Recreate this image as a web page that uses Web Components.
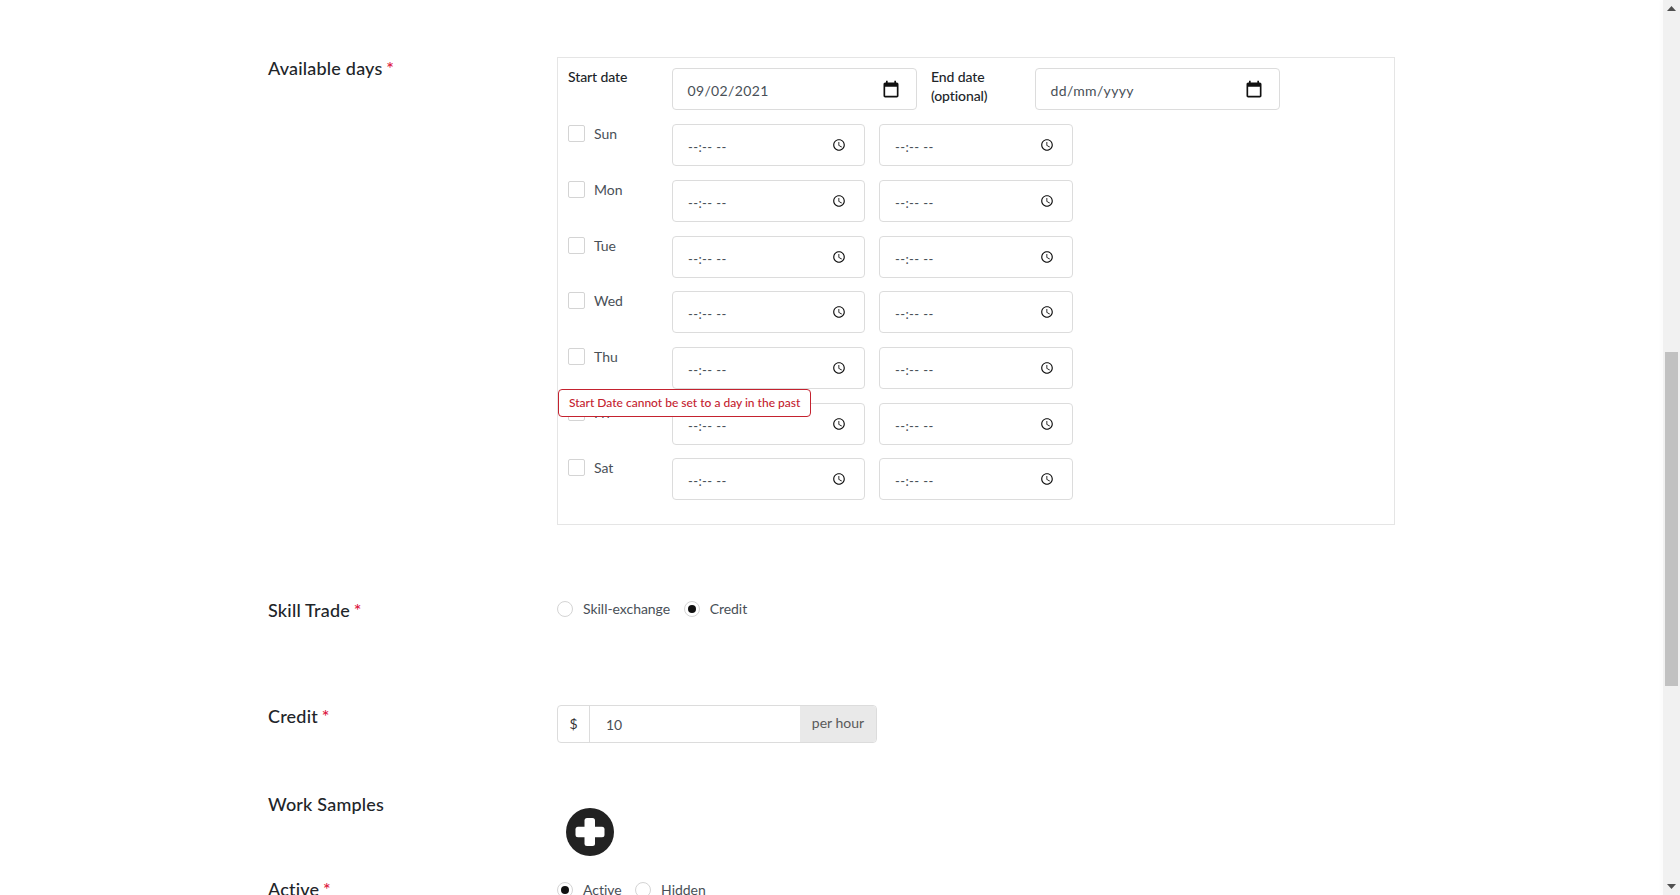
<!DOCTYPE html>
<html lang="en">
<head>
<meta charset="utf-8">
<title>Available days</title>
<style>
  html, body { margin: 0; height: 100%; overflow: hidden; background: #fff; }
  body { font-family: Lato, "Liberation Sans", sans-serif; color: #212529; }
</style>
</head>
<body>
<app-page>
  <form-row label="Available days" required style="--pad: 2px; margin-bottom: 72px">
    <avail-panel>
      <panel-row>
        <field-label strong>Start date</field-label>
        <picker-field kind="date" value="09/02/2021" style="width: 245px"></picker-field>
        <field-label strong style="margin-left: 14px">End date<br>(optional)</field-label>
        <picker-field kind="date" value="dd/mm/yyyy" style="width: 245px"></picker-field>
      </panel-row>
      <day-row day="Sun"></day-row>
      <day-row day="Mon"></day-row>
      <day-row day="Tue"></day-row>
      <day-row day="Wed"></day-row>
      <day-row day="Thu"></day-row>
      <day-row day="Fri"></day-row>
      <day-row day="Sat"></day-row>
      <error-tip slot="tip">Start Date cannot be set to a day in the past</error-tip>
    </avail-panel>
  </form-row>

  <form-row label="Skill Trade" required style="--pad: 1px; margin-bottom: 79px">
    <radio-group>
      <radio-option>Skill-exchange</radio-option>
      <radio-option checked>Credit</radio-option>
    </radio-group>
  </form-row>

  <form-row label="Credit" required style="--pad: 2px; margin-bottom: 48px">
    <credit-group value="10"></credit-group>
  </form-row>

  <form-row label="Work Samples" style="--pad: 17px; margin-bottom: 20px">
    <add-button></add-button>
  </form-row>

  <form-row label="Active" required style="--pad: 3px">
    <radio-group>
      <radio-option checked>Active</radio-option>
      <radio-option>Hidden</radio-option>
    </radio-group>
  </form-row>
</app-page>

<script>
class AppPage extends HTMLElement {
  constructor () {
    super()
    this.attachShadow({ mode: 'open' }).innerHTML = `
      <style>
        :host { display: flex; height: 895px; overflow: hidden; }
        main { flex: 1; min-width: 0; padding: 55px 0 0 268px; box-sizing: border-box; overflow: hidden; }
        .bar { width: 17px; flex: none; background: #f1f1f1; display: flex; flex-direction: column; align-items: center; box-shadow: -3px 0 4px rgba(0,0,0,.015); }
        .arrow { height: 17px; flex: none; display: flex; align-items: center; justify-content: center; }
        .track { flex: 1; width: 100%; box-sizing: border-box; padding: 335px 2px 192px; display: flex; }
        .thumb { flex: 1; background: #c1c1c1; }
      </style>
      <main><slot></slot></main>
      <div class="bar">
        <div class="arrow"><svg width="9" height="5" viewBox="0 0 9 5"><path d="M4.5 0 9 5H0z" fill="#505050"/></svg></div>
        <div class="track"><div class="thumb"></div></div>
        <div class="arrow"><svg width="9" height="5" viewBox="0 0 9 5"><path d="M0 0h9L4.5 5z" fill="#505050"/></svg></div>
      </div>
    `
  }
}

class FormRow extends HTMLElement {
  constructor () {
    super()
    this.attachShadow({ mode: 'open' })
  }

  connectedCallback () {
    const star = this.hasAttribute('required') ? '<span class="star">*</span>' : ''
    this.shadowRoot.innerHTML = `
      <style>
        :host { display: grid; grid-template-columns: 289px 838px; }
        .label { font-size: 18px; line-height: 27px; font-weight: 500; letter-spacing: .2px; color: #212529; }
        .star { color: #dc143c; margin-left: -1px; }
        .content { padding-top: var(--pad, 0); min-width: 0; }
      </style>
      <div class="label">${this.getAttribute('label')} ${star}</div>
      <div class="content"><slot></slot></div>
    `
  }
}

class AvailPanel extends HTMLElement {
  constructor () {
    super()
    this.attachShadow({ mode: 'open' }).innerHTML = `
      <style>
        :host { display: block; position: relative; box-sizing: border-box; height: 468px; border: 1px solid #e5e5e5; padding: 10px 10px 0; }
        .tip { position: absolute; left: 0; top: 331px; }
      </style>
      <slot></slot>
      <div class="tip"><slot name="tip"></slot></div>
    `
  }
}

class PanelRow extends HTMLElement {
  constructor () {
    super()
    this.attachShadow({ mode: 'open' }).innerHTML = `
      <style>
        :host { display: flex; height: 42px; margin-bottom: 14.4px; }
      </style>
      <slot></slot>
    `
  }
}

class FieldLabel extends HTMLElement {
  constructor () {
    super()
    this.attachShadow({ mode: 'open' }).innerHTML = `
      <style>
        :host { display: block; width: 104px; flex: none; font-size: 14px; line-height: 19px; margin-top: -1px; letter-spacing: -.1px; color: #333; }
        :host([strong]) { font-weight: 500; color: #212529; }
      </style>
      <slot></slot>
    `
  }
}

const ICONS = {
  date: '<svg width="20" height="20" viewBox="0 0 24 24"><path fill="#111" d="M19 3h-1V1h-2v2H8V1H6v2H5c-1.11 0-1.99.9-1.99 2L3 19c0 1.1.89 2 2 2h14c1.1 0 2-.9 2-2V5c0-1.1-.9-2-2-2zm0 16H5V8h14v11z"/></svg>',
  time: '<svg width="14" height="14" viewBox="0 0 24 24"><path fill="#111" d="M11.99 2C6.47 2 2 6.48 2 12s4.47 10 9.99 10C17.52 22 22 17.52 22 12S17.52 2 11.99 2zM12 20c-4.42 0-8-3.58-8-8s3.58-8 8-8 8 3.58 8 8-3.58 8-8 8zm.5-13H11v6l5.25 3.15.75-1.23-4.5-2.67z"/></svg>'
}

class PickerField extends HTMLElement {
  constructor () {
    super()
    this.attachShadow({ mode: 'open' })
  }

  connectedCallback () {
    const kind = this.getAttribute('kind')
    this.shadowRoot.innerHTML = `
      <style>
        :host { display: flex; box-sizing: border-box; width: 193.5px; height: 42px; flex: none; align-items: center; justify-content: space-between; border: 1px solid #dcdcdc; border-radius: 4px; padding: 0 15.5px 0 14.5px; background: #fff; font-size: 14px; color: #495057; }
        :host([kind="time"]) { padding-right: 18px; padding-left: 15px; }
        span { position: relative; top: 1px; letter-spacing: .35px; }
        :host([kind="time"]) span { top: 2px; letter-spacing: .4px; font-size: 13px; }
        :host([kind="date"]) svg { margin-top: 1px; }
        svg { display: block; }
      </style>
      <span>${this.getAttribute('value')}</span>${ICONS[kind]}
    `
  }
}

class CheckBox extends HTMLElement {
  constructor () {
    super()
    this.attachShadow({ mode: 'open' }).innerHTML = `
      <style>
        :host { display: block; box-sizing: border-box; width: 17px; height: 17px; border: 1px solid #d4d4d4; border-radius: 2px; background: #fff; flex: none; }
      </style>
    `
  }
}

class DayRow extends HTMLElement {
  constructor () {
    super()
    this.attachShadow({ mode: 'open' })
  }

  connectedCallback () {
    this.shadowRoot.innerHTML = `
      <style>
        :host { display: flex; height: 42px; margin-bottom: 13.67px; }
        .day { width: 104px; flex: none; display: flex; gap: 9px; padding-top: 1px; font-size: 14px; line-height: 17px; color: #495057; box-sizing: border-box; }
        .times { display: flex; gap: 14.5px; }
      </style>
      <div class="day"><check-box></check-box><span>${this.getAttribute('day')}</span></div>
      <div class="times">
        <picker-field kind="time" value="--:-- --" style="width: 192.5px"></picker-field>
        <picker-field kind="time" value="--:-- --"></picker-field>
      </div>
    `
  }
}

class ErrorTip extends HTMLElement {
  constructor () {
    super()
    this.attachShadow({ mode: 'open' }).innerHTML = `
      <style>
        :host { display: block; box-sizing: border-box; height: 28px; line-height: 26px; padding: 0 10px; border: 1px solid #c4222f; border-radius: 4px; background: #fff; color: #c4222f; font-size: 12px; font-weight: 500; white-space: nowrap; }
      </style>
      <slot></slot>
    `
  }
}

class RadioGroup extends HTMLElement {
  constructor () {
    super()
    this.attachShadow({ mode: 'open' }).innerHTML = `
      <style>
        :host { display: flex; gap: 13.5px; height: 22px; align-items: center; }
      </style>
      <slot></slot>
    `
  }
}

class RadioOption extends HTMLElement {
  constructor () {
    super()
    this.attachShadow({ mode: 'open' }).innerHTML = `
      <style>
        :host { display: flex; align-items: center; gap: 10px; font-size: 14px; letter-spacing: -.03px; color: #495057; }
        .dot { box-sizing: border-box; width: 16px; height: 16px; border: 1px solid #d4d4d4; border-radius: 50%; display: flex; align-items: center; justify-content: center; background: #fff; }
        :host([checked]) .dot::after { content: ""; width: 8px; height: 8px; border-radius: 50%; background: #111; }
        .text { position: relative; top: -1px; }
      </style>
      <span class="dot"></span><span class="text"><slot></slot></span>
    `
  }
}

class CreditGroup extends HTMLElement {
  constructor () {
    super()
    this.attachShadow({ mode: 'open' })
  }

  connectedCallback () {
    this.shadowRoot.innerHTML = `
      <style>
        :host { display: flex; box-sizing: border-box; width: 320px; height: 38px; border: 1px solid #dcdcdc; border-radius: 4px; font-size: 14px; color: #495057; overflow: hidden; }
        .pre { width: 32px; flex: none; box-sizing: border-box; border-right: 1px solid #dcdcdc; display: flex; align-items: center; justify-content: center; color: #333; padding-bottom: 2px; }
        .val { flex: 1; padding-left: 16px; line-height: 38px; position: relative; }
        .post { width: 76px; flex: none; background: #e9e9e9; display: flex; align-items: center; justify-content: center; padding-bottom: 4px; box-sizing: border-box; color: #5a5a5a; }
      </style>
      <div class="pre">$</div>
      <div class="val">${this.getAttribute('value')}</div>
      <div class="post">per hour</div>
    `
  }
}

class AddButton extends HTMLElement {
  constructor () {
    super()
    this.attachShadow({ mode: 'open' }).innerHTML = `
      <style>
        :host { display: block; width: 48px; height: 48px; margin-left: 9px; }
        svg { display: block; }
      </style>
      <svg width="48" height="48" viewBox="0 0 48 48">
        <circle cx="24" cy="24" r="24" fill="#222"/>
        <rect x="18.5" y="10" width="10.5" height="28" rx="2.5" fill="#fff"/>
        <rect x="9.5" y="18.8" width="29" height="10.4" rx="2.5" fill="#fff"/>
      </svg>
    `
  }
}

customElements.define('app-page', AppPage)
customElements.define('form-row', FormRow)
customElements.define('avail-panel', AvailPanel)
customElements.define('panel-row', PanelRow)
customElements.define('field-label', FieldLabel)
customElements.define('picker-field', PickerField)
customElements.define('check-box', CheckBox)
customElements.define('day-row', DayRow)
customElements.define('error-tip', ErrorTip)
customElements.define('radio-group', RadioGroup)
customElements.define('radio-option', RadioOption)
customElements.define('credit-group', CreditGroup)
customElements.define('add-button', AddButton)
</script>
</body>
</html>
